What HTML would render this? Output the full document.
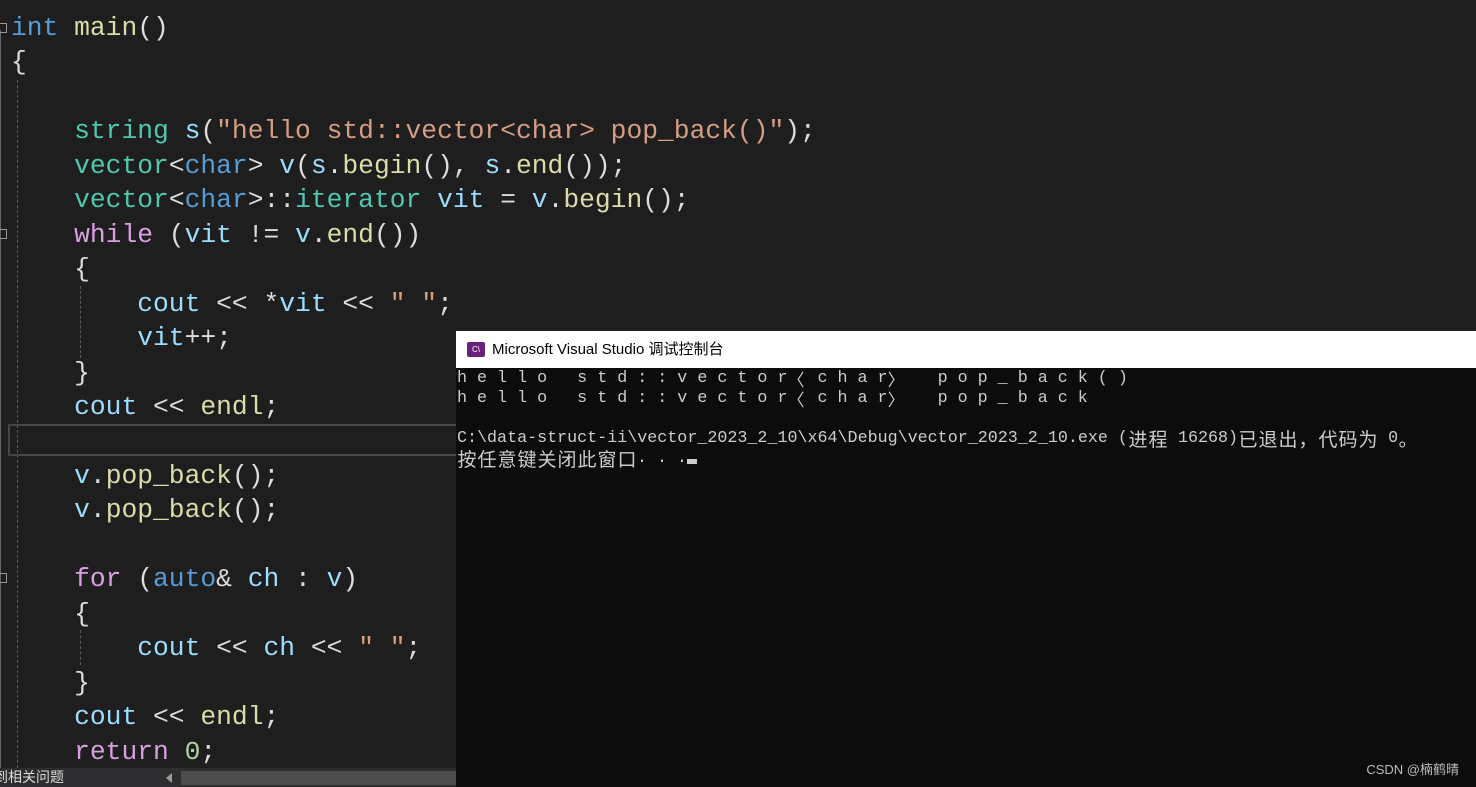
<!DOCTYPE html>
<html><head><meta charset="utf-8"><style>
html,body{margin:0;width:1476px;height:787px;overflow:hidden}
body{background:#1e1e1e;position:relative;font-family:"Liberation Mono",monospace}
.code{position:absolute;left:11px;top:11px;font-size:26.3px;line-height:34.45px;color:#dcdcdc;white-space:pre}
.k{color:#569cd6}.t{color:#4ec9b0}.f{color:#dcdcaa}.v{color:#9cdcfe}.s{color:#d69d85}.p{color:#d8a0df}.n{color:#b5cea8}
.g{position:absolute;border-left:1px dashed #5a5a5a;width:0}
.fold{position:absolute;left:0;width:7px;height:10px;border:1px solid #999;border-left:none;box-sizing:border-box}
.con{position:absolute;left:456px;top:331px;width:1020px;height:456px;background:#0c0c0c}
.tb{height:37px;background:#fff;font-family:"Liberation Sans","Noto Sans CJK SC",sans-serif;font-size:15px;color:#000;line-height:37px;padding-left:36px;position:relative}
.ct{font-family:"Liberation Mono","Noto Sans CJK SC",monospace;font-size:16.7px;line-height:20px;height:20px;color:#cccccc;white-space:pre;padding-left:1px;overflow:hidden}
.c{font-family:"Noto Sans CJK SC",sans-serif;font-size:19px;display:inline-block;width:20px;height:20px;text-align:center;line-height:20px;vertical-align:top}
.b{font-family:"Noto Sans CJK SC",sans-serif;font-size:17px;display:inline-block;height:20px;line-height:20px;vertical-align:top;text-align:left;overflow:hidden}
</style></head><body>
<div class="g" style="left:17px;top:80px;height:688px"></div>
<div class="g" style="left:80px;top:286px;height:72px"></div>
<div class="g" style="left:80px;top:630px;height:35px"></div>
<div style="position:absolute;left:0;top:30px;width:2px;height:738px;border-left:1px solid #666"></div>
<div class="fold" style="top:23px"></div>
<div class="fold" style="top:229px"></div>
<div class="fold" style="top:573px"></div>
<div style="position:absolute;left:8px;top:424px;width:460px;height:32px;border:2px solid #464646;box-sizing:border-box"></div>
<div class="code"><span class="k">int</span> <span class="f">main</span>()
{

    <span class="t">string</span> <span class="v">s</span>(<span class="s">"hello std::vector&lt;char&gt; pop_back()"</span>);
    <span class="t">vector</span>&lt;<span class="k">char</span>&gt; <span class="v">v</span>(<span class="v">s</span>.<span class="f">begin</span>(), <span class="v">s</span>.<span class="f">end</span>());
    <span class="t">vector</span>&lt;<span class="k">char</span>&gt;::<span class="t">iterator</span> <span class="v">vit</span> = <span class="v">v</span>.<span class="f">begin</span>();
    <span class="p">while</span> (<span class="v">vit</span> != <span class="v">v</span>.<span class="f">end</span>())
    {
        <span class="v">cout</span> &lt;&lt; *<span class="v">vit</span> &lt;&lt; <span class="s">" "</span>;
        <span class="v">vit</span>++;
    }
    <span class="v">cout</span> &lt;&lt; <span class="f">endl</span>;

    <span class="v">v</span>.<span class="f">pop_back</span>();
    <span class="v">v</span>.<span class="f">pop_back</span>();

    <span class="p">for</span> (<span class="k">auto</span>&amp; <span class="v">ch</span> : <span class="v">v</span>)
    {
        <span class="v">cout</span> &lt;&lt; <span class="v">ch</span> &lt;&lt; <span class="s">" "</span>;
    }
    <span class="v">cout</span> &lt;&lt; <span class="f">endl</span>;
    <span class="p">return</span> <span class="n">0</span>;</div>
<div style="position:absolute;left:0;top:768px;width:456px;height:19px;background:#2d2d30;font-family:'Liberation Sans','Noto Sans CJK SC',sans-serif;font-size:14px;color:#ddd;line-height:19px">
<span style="position:absolute;left:-6px">到相关问题</span>
<span style="position:absolute;left:166px;top:5px;width:0;height:0;border-top:5px solid transparent;border-bottom:5px solid transparent;border-right:6px solid #999"></span>
<span style="position:absolute;left:181px;top:3px;width:275px;height:14px;background:#4d4d4d"></span></div>
<div class="con">
<div class="tb"><span style="position:absolute;left:11px;top:11px;width:18px;height:15px;background:#68217a;border-radius:2px;color:#fff;font-size:8px;line-height:15px;text-align:center">C\</span>Microsoft Visual Studio 调试控制台</div>
<div class="ct" style="margin-top:1px">h e l l o   s t d : : v e c t o r<span class="b" style="width:30px">〈</span>c h a r<span class="b" style="width:50px">〉</span>p o p _ b a c k ( )</div>
<div class="ct">h e l l o   s t d : : v e c t o r<span class="b" style="width:30px">〈</span>c h a r<span class="b" style="width:50px">〉</span>p o p _ b a c k</div>
<div class="ct"> </div>
<div class="ct">C:\data-struct-ii\vector_2023_2_10\x64\Debug\vector_2023_2_10.exe (<span class="c">进</span><span class="c">程</span> 16268)<span class="c">已</span><span class="c">退</span><span class="c">出</span><span class="c">，</span><span class="c">代</span><span class="c">码</span><span class="c">为</span> 0<span class="c">。</span></div>
<div class="ct"><span class="c">按</span><span class="c">任</span><span class="c">意</span><span class="c">键</span><span class="c">关</span><span class="c">闭</span><span class="c">此</span><span class="c">窗</span><span class="c">口</span>. . .<span style="display:inline-block;width:10px;height:5px;background:#ccc;vertical-align:-2px"></span></div>
<div style="position:absolute;right:17px;bottom:9px;font-family:'Liberation Sans','Noto Sans CJK SC',sans-serif;font-size:13px;color:#bbb">CSDN @楠鹤晴</div>
</div>
</body></html>
